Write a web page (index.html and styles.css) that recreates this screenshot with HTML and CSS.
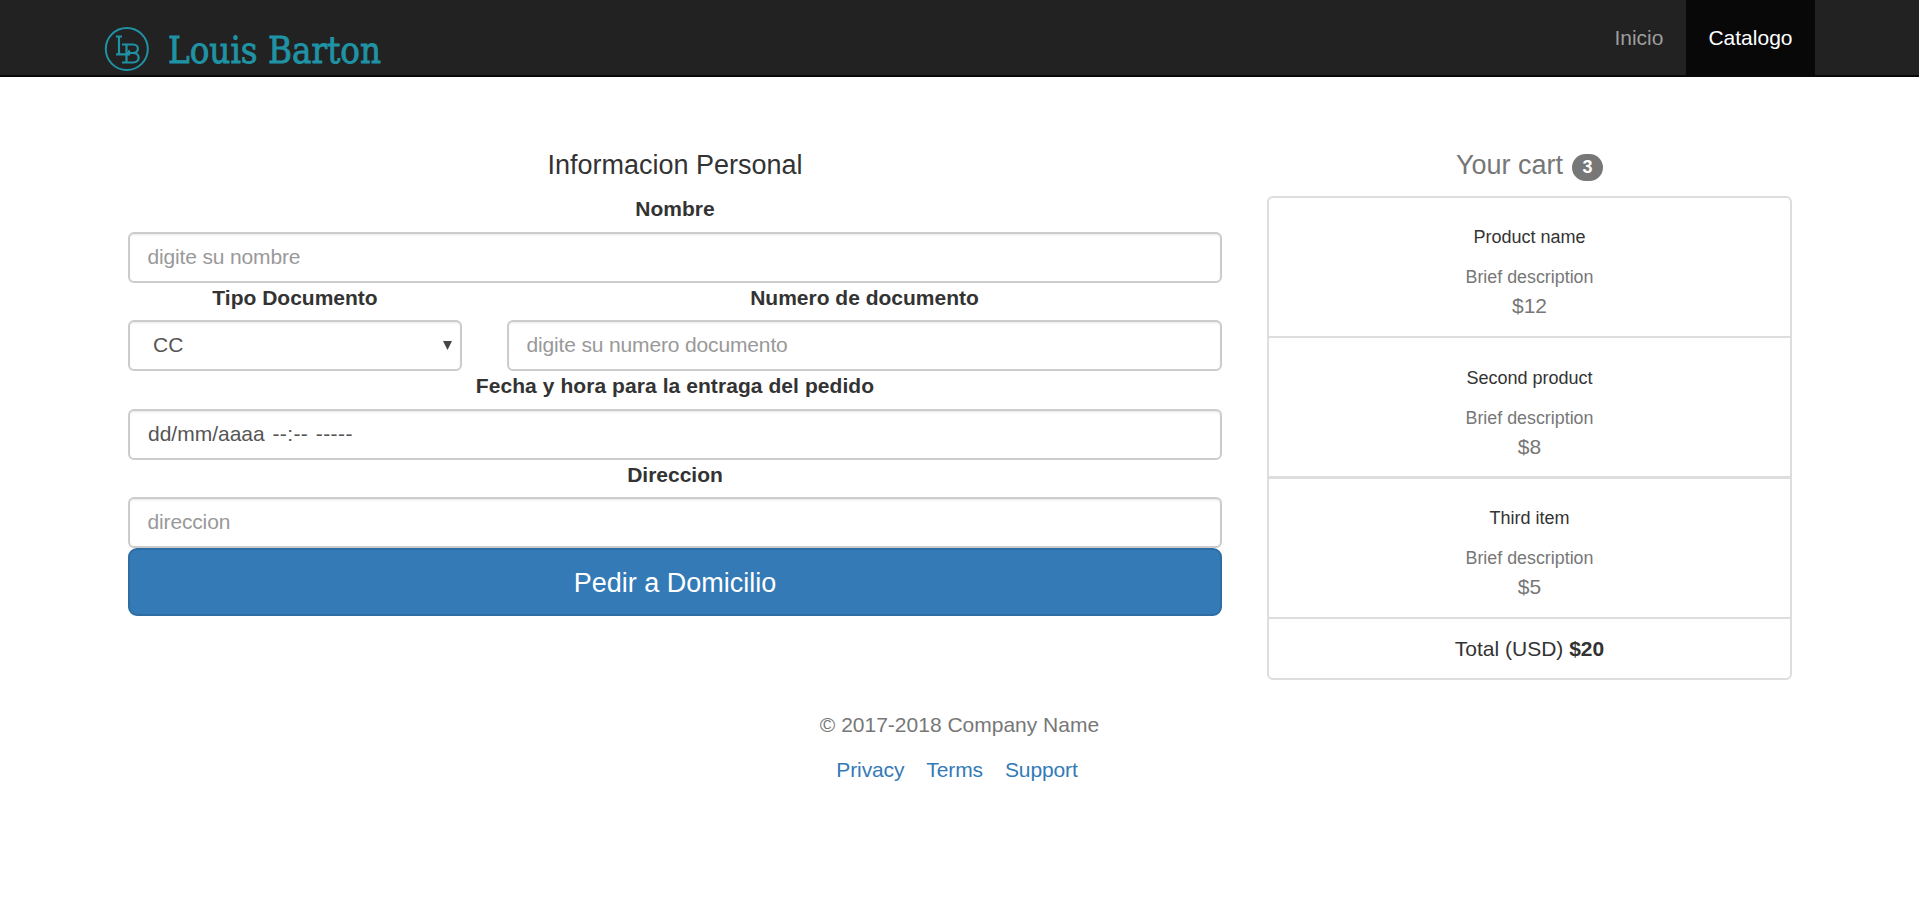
FILE: index.html
```html
<!DOCTYPE html>
<html lang="es">
<head>
<meta charset="utf-8">
<title>Louis Barton</title>
<link rel="stylesheet" href="styles.css">
</head>
<body>
<nav class="navbar">
  <div class="container navbar-inner">
    <a class="brand" href="#" aria-label="Louis Barton">
      <svg width="290" height="49" viewBox="0 0 290 49">
        <circle cx="21.8" cy="23" r="21" fill="none" stroke="#1f93a5" stroke-width="2"/>
        <g fill="none" stroke="#1f93a5" stroke-width="2.2">
          <path d="M11 10.500h6M14 10.500v18M11 28.300h13v-4"/>
          <path d="M17 18.500h11c6.500 0 6.500 8.500 0 8.500h-7M28 27c7.500 0 7.500 9.500 0 9.500H17M21.500 18.500V36.500"/>
        </g>
        <text class="wordmark" x="63" y="37" font-size="38" textLength="213" lengthAdjust="spacingAndGlyphs">Louis Barton</text>
      </svg>
    </a>
    <ul class="nav">
      <li><a href="#">Inicio</a></li>
      <li class="active"><a href="#">Catalogo</a></li>
    </ul>
  </div>
</nav>
<main class="container content">
  <form class="info">
    <h4 class="heading">Informacion Personal</h4>
    <div class="field">
      <label for="nombre">Nombre</label>
      <input class="control" id="nombre" type="text" placeholder="digite su nombre">
    </div>
    <div class="field-row">
      <div class="field">
        <label for="tipo">Tipo Documento</label>
        <div class="control select" id="tipo">CC<svg width="9" height="9" viewBox="0 0 9 9"><path d="M0 0h9L4.5 9z" fill="#444"/></svg></div>
      </div>
      <div class="field">
        <label for="numero">Numero de documento</label>
        <input class="control" id="numero" type="text" placeholder="digite su numero documento">
      </div>
    </div>
    <div class="field">
      <label class="wide">Fecha y hora para la entraga del pedido</label>
      <div class="control date">dd/mm/aaaa <span class="time">--:--</span> <span class="time">-----</span></div>
    </div>
    <div class="field">
      <label for="direccion">Direccion</label>
      <input class="control" id="direccion" type="text" placeholder="direccion">
    </div>
    <button class="submit" type="button">Pedir a Domicilio</button>
  </form>
  <aside class="cart">
    <h4 class="heading muted">Your cart <span class="badge">3</span></h4>
    <ul class="cart-list">
      <li><h6>Product name</h6><small>Brief description</small><span class="price">$12</span></li>
      <li class="thick"><h6>Second product</h6><small>Brief description</small><span class="price">$8</span></li>
      <li><h6>Third item</h6><small>Brief description</small><span class="price">$5</span></li>
      <li class="total">Total (USD) <strong>$20</strong></li>
    </ul>
  </aside>
</main>
<footer class="footer">
  <p>© 2017-2018 Company Name</p>
  <ul class="links">
    <li><a href="#">Privacy</a></li>
    <li><a href="#">Terms</a></li>
    <li><a href="#">Support</a></li>
  </ul>
</footer>
</body>
</html>
```
FILE: styles.css
```css
* { box-sizing: border-box; }
body {
  margin: 0;
  font: 21px/30px "Liberation Sans", Arial, sans-serif;
  color: #333;
  background: #fff;
  overflow: hidden;
}
ul { margin: 0; padding: 0; list-style: none; }
a { color: #337ab7; text-decoration: none; }
.container { width: 1755px; margin: 0 auto; }
.navbar { height: 77px; background: #222; border-bottom: 2px solid #080808; }
.navbar-inner { display: flex; justify-content: space-between; padding: 0 22px 0 23px; }
.brand { padding-top: 26px; height: 75px; }
.brand svg { display: block; overflow: visible; }
.wordmark { font-family: "DejaVu Serif", serif; fill: #1f93a5; stroke: #1f93a5; stroke-width: .9px; }
.nav { display: flex; }
.nav a { display: block; height: 75px; padding: 22.5px; color: #9d9d9d; }
.nav .active a { background: #080808; color: #fff; }
.content {
  display: grid;
  grid-template-columns: 1094px 525px;
  column-gap: 45px;
  padding: 74px 0 0 46px;
  text-align: center;
}
.heading { height: 30px; margin: 0 0 13px; font-size: 27px; line-height: 29.7px; font-weight: 400; }
.muted { color: #777; margin-bottom: 15px; }
.field label { display: block; height: 30px; margin-bottom: 7.5px; font-weight: 700; }
.field .wide { letter-spacing: .07px; }
.field-row { display: grid; grid-template-columns: 334px 1fr; column-gap: 45px; }
.control {
  display: block;
  width: 100%;
  height: 51px;
  padding: 8.5px 17.5px 9.5px;
  border: 2px solid #ccc;
  border-radius: 6px;
  background: #fff;
  box-shadow: inset 0 1.5px 1.5px rgba(0, 0, 0, .075);
  color: #555;
  font: inherit;
  text-align: left;
}
.control::placeholder { color: #999; opacity: 1; letter-spacing: -.15px; }
.select { display: flex; justify-content: space-between; align-items: center; padding: 8.5px 8px 9.5px 23px; }
.date { padding-left: 18px; }
.time { letter-spacing: .4px; margin-left: 1.8px; }
.submit {
  display: block;
  width: 100%;
  height: 68px;
  padding: 1px 0 0;
  border: 2px solid #2e6da4;
  border-radius: 9px;
  background: #337ab7;
  color: #fff;
  font: 27px/36px "Liberation Sans", Arial, sans-serif;
}
.badge {
  display: inline-block;
  margin-left: 1.5px;
  padding: 4.5px 10.5px;
  border-radius: 15px;
  background: #777;
  color: #fff;
  font-size: 18px;
  line-height: 18px;
  font-weight: 700;
  vertical-align: 1px;
}
.cart-list { border: 2px solid #ddd; border-radius: 6px; }
.cart-list li { height: 140px; padding-top: 13px; border-bottom: 2px solid #ddd; }
.cart-list .thick { height: 141px; padding-top: 14px; border-bottom-width: 3px; }
.cart-list .total { height: 59px; padding-top: 15px; border: 0; }
.cart-list h6 { margin: 16px 0 15px; font-size: 18px; line-height: 20px; font-weight: 400; }
.cart-list small, .price { display: block; color: #777; }
.cart-list small { height: 29px; font-size: 17.85px; }
.footer { padding-top: 30px; text-align: center; color: #777; }
.footer p { margin: 0 0 15px; }
.links { display: flex; justify-content: center; gap: 22px; padding-right: 5px; letter-spacing: -.12px; }
```
